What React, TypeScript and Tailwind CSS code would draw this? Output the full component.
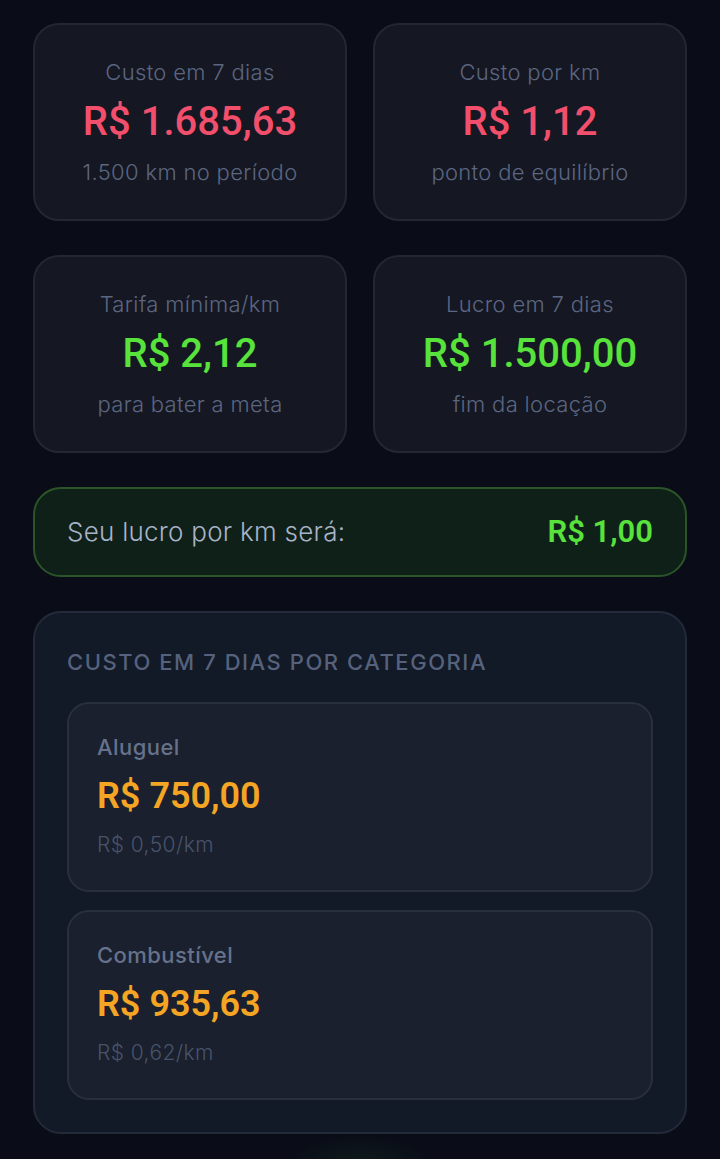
import React from "react";

function StatCard({ label, value, sub, color }: { label: string; value: string; sub: string; color: string }) {
  return (
    <div className="h-[198px] rounded-[26px] border-2 border-[#242733] bg-[#151722] flex flex-col items-center justify-center gap-[14px]">
      <div className="text-[22px] leading-[28px] font-light text-[#5b6681] tracking-[0.015em]">{label}</div>
      <div className={`font-['Roboto',sans-serif] text-[40px] leading-[44px] font-medium ${color}`}>{value}</div>
      <div className="text-[22px] leading-[28px] font-light text-[#5b6681] tracking-[0.015em]">{sub}</div>
    </div>
  );
}

function CatCard({ label, value, sub }: { label: string; value: string; sub: string }) {
  return (
    <div className="h-[190px] rounded-[22px] border-2 border-[#283040] bg-[#1a202d] pl-[28px] flex flex-col justify-center gap-[14px]">
      <div className="text-[22px] leading-[28px] font-medium text-[#66728b] tracking-[0.02em] -mt-[3px]">{label}</div>
      <div className="font-['Roboto',sans-serif] text-[36px] leading-[42px] font-semibold text-[#f5a524]">{value}</div>
      <div className="text-[21px] leading-[28px] font-light text-[#48536a] tracking-[0.02em]">{sub}</div>
    </div>
  );
}

export default function App() {
  return (
    <div className="min-h-screen w-[720px] bg-[#0a0d18] px-[33px] pt-[23px] flex flex-col font-['Inter','Noto_Sans',sans-serif]">
      <div className="grid grid-cols-2 gap-x-[26px] gap-y-[34px]">
        <StatCard label="Custo em 7 dias" value="R$ 1.685,63" sub="1.500 km no período" color="text-[#f24f6c]" />
        <StatCard label="Custo por km" value="R$ 1,12" sub="ponto de equilíbrio" color="text-[#f24f6c]" />
        <StatCard label="Tarifa mínima/km" value="R$ 2,12" sub="para bater a meta" color="text-[#58e23c]" />
        <StatCard label="Lucro em 7 dias" value="R$ 1.500,00" sub="fim da locação" color="text-[#58e23c]" />
      </div>

      <div className="mt-[34px] h-[90px] rounded-[28px] border-2 border-[#2b5528] bg-[#0f2019] px-[32px] flex items-center justify-between">
        <div className="text-[26px] leading-[32px] font-light text-[#a8b3c6] tracking-[0.01em]">Seu lucro por km será:</div>
        <div className="font-['Roboto',sans-serif] text-[31px] leading-[36px] font-semibold text-[#58e23c]">R$ 1,00</div>
      </div>

      <div className="mt-[34px] rounded-[28px] border-2 border-[#232b3a] bg-[#121927] px-[32px] pt-[36px] pb-[32px] flex flex-col">
        <div className="text-[22px] leading-[26px] font-medium uppercase tracking-[0.07em] text-[#56627c]">
          Custo em 7 dias por categoria
        </div>
        <div className="mt-[27px] flex flex-col gap-[18px]">
          <CatCard label="Aluguel" value="R$ 750,00" sub="R$ 0,50/km" />
          <CatCard label="Combustível" value="R$ 935,63" sub="R$ 0,62/km" />
        </div>
      </div>

      <div className="h-[26px] bg-[radial-gradient(ellipse_70px_24px_at_50%_100%,rgba(40,110,40,0.12),transparent)]" />
    </div>
  );
}
